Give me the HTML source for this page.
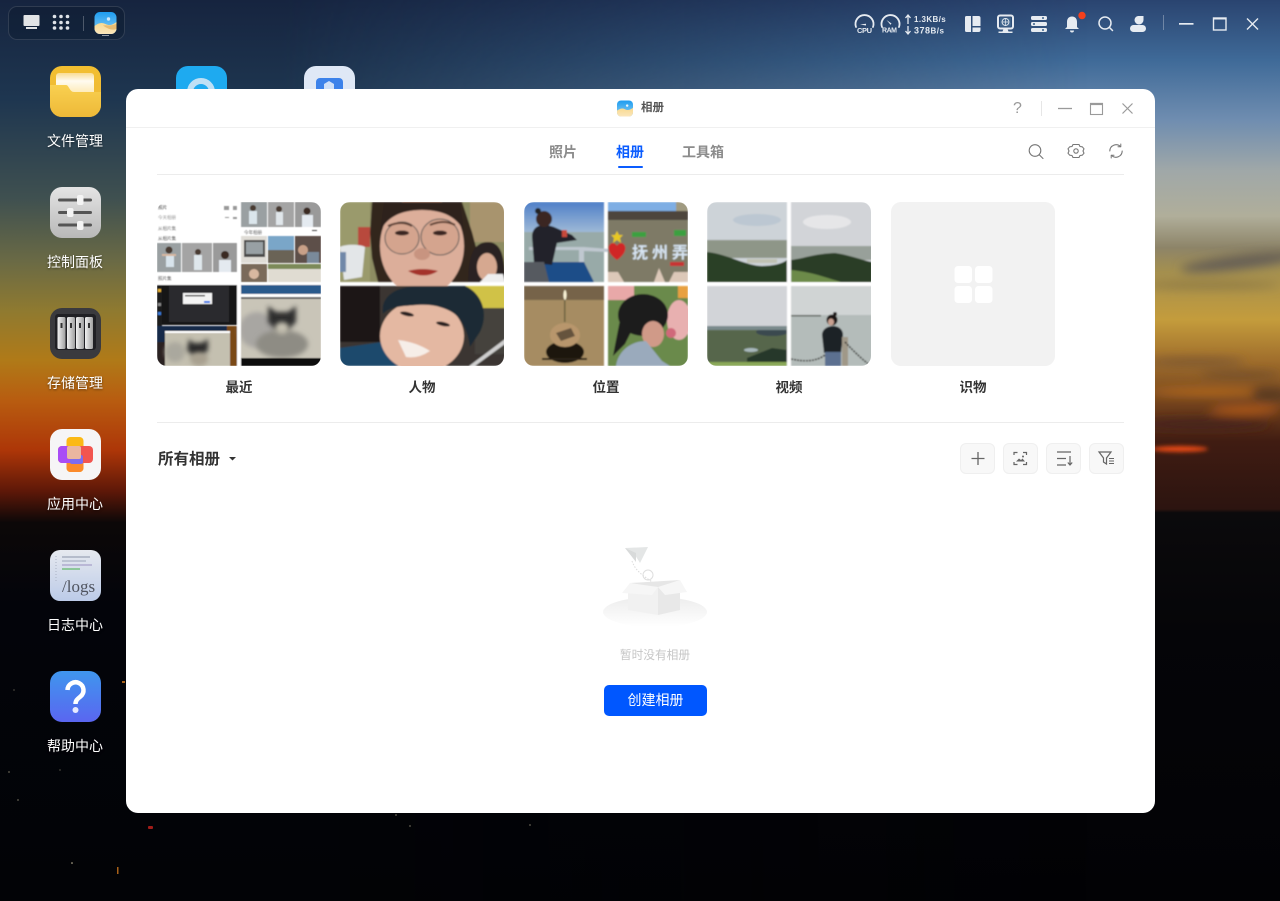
<!DOCTYPE html>
<html lang="zh"><head><meta charset="utf-8"><title>相册</title>
<style>
html,body{margin:0;padding:0;width:1280px;height:901px;overflow:hidden;background:#020306}
body{position:relative;font-family:"Liberation Sans","Noto Sans CJK SC",sans-serif}
.abs,.lbl,.t,.tile,.tl,.btn{position:absolute}
svg{display:block;overflow:visible}
.lbl{left:25px;width:100px;text-align:center;color:#fff;font-size:14px;line-height:20px;text-shadow:0 1px 2px rgba(0,0,0,.5)}
.win{position:absolute;left:126px;top:89px;width:1029px;height:724px;background:#fff;border-radius:12px;overflow:hidden}
.t{font-weight:700;font-size:14px;line-height:20px;color:#8c8c8c;top:142px}
.line{position:absolute;height:1px;background:#ececec}
.tile{top:202px;width:164px;height:164px;border-radius:10px;overflow:hidden}
.tl{top:379px;width:164px;text-align:center;font-size:13.5px;font-weight:700;color:#333;line-height:18px}
.btn{top:443px;width:33px;height:29px;background:#f8f8f8;border:1px solid #efefef;border-radius:6px}
</style></head><body>

<!-- wallpaper -->
<svg class="abs" style="left:0;top:0" width="1280" height="901">
<defs>
<linearGradient id="gr" x1="0" y1="0" x2="0" y2="1">
<stop offset="0" stop-color="#2a4470"/><stop offset=".067" stop-color="#3f6a98"/><stop offset=".133" stop-color="#6f8db0"/><stop offset=".19" stop-color="#a0a8a8"/><stop offset=".24" stop-color="#b0ae9a"/><stop offset=".275" stop-color="#8d8468"/><stop offset=".3" stop-color="#a38f50"/><stop offset=".355" stop-color="#c49c3c"/><stop offset=".4" stop-color="#a06e2c"/><stop offset=".45" stop-color="#70401c"/><stop offset=".49" stop-color="#401c12"/><stop offset=".565" stop-color="#2c1410"/><stop offset=".569" stop-color="#0b0a0c"/><stop offset=".7" stop-color="#050508"/><stop offset="1" stop-color="#020205"/>
</linearGradient>
<linearGradient id="gl" x1="0" y1="0" x2="0" y2="1">
<stop offset="0" stop-color="#16243f"/><stop offset=".11" stop-color="#1e3650"/><stop offset=".22" stop-color="#3f5050"/><stop offset=".29" stop-color="#6a6a45"/><stop offset=".345" stop-color="#8f7a30"/><stop offset=".4" stop-color="#b07a18"/><stop offset=".445" stop-color="#b85c10"/><stop offset=".5" stop-color="#ad3608"/><stop offset=".545" stop-color="#5e1808"/><stop offset=".58" stop-color="#0c0808"/><stop offset=".67" stop-color="#03040a"/><stop offset="1" stop-color="#020306"/>
</linearGradient>
<linearGradient id="fade" x1="0" y1="0" x2="1" y2="0"><stop offset="0" stop-color="#fff"/><stop offset=".22" stop-color="#fff"/><stop offset=".85" stop-color="#000"/></linearGradient>
<mask id="m"><rect width="1280" height="901" fill="url(#fade)"/></mask>
<filter id="b4" x="-30%" y="-100%" width="160%" height="300%"><feGaussianBlur stdDeviation="5"/></filter>
<filter id="b2" x="-30%" y="-100%" width="160%" height="300%"><feGaussianBlur stdDeviation="2"/></filter>
</defs>
<rect width="1280" height="901" fill="url(#gr)"/>
<rect width="1280" height="901" fill="url(#gl)" mask="url(#m)"/>
<g filter="url(#b4)">
<ellipse cx="1240" cy="262" rx="60" ry="7" fill="#665f54" transform="rotate(-7 1240 262)"/>
<ellipse cx="1210" cy="285" rx="70" ry="4" fill="#8f7a44"/>
<ellipse cx="1195" cy="362" rx="50" ry="4" fill="#7a5630"/>
<ellipse cx="1240" cy="375" rx="40" ry="3" fill="#6b4a2a"/>
<ellipse cx="1210" cy="392" rx="60" ry="3" fill="#c4701e"/>
<ellipse cx="1245" cy="410" rx="35" ry="3" fill="#d2681a"/>
<ellipse cx="1270" cy="395" rx="20" ry="7" fill="#5a3a22"/>
<ellipse cx="1200" cy="424" rx="70" ry="5" fill="#45241a"/>
</g>
<ellipse cx="1180" cy="449" rx="28" ry="3" fill="#e84a14" filter="url(#b2)"/>
<g fill="#c9c0a0"><circle cx="9" cy="772" r=".6"/><circle cx="18" cy="800" r=".6"/><circle cx="72" cy="863" r=".8"/><circle cx="410" cy="826" r=".6"/><circle cx="396" cy="815" r=".6"/><circle cx="530" cy="825" r=".6"/><circle cx="60" cy="770" r=".5"/><circle cx="14" cy="690" r=".5"/></g>
<rect x="148" y="826" width="5" height="3" fill="#a01c18" rx="1"/>
<rect x="117" y="867" width="1.500" height="7" fill="#a86018"/>
<rect x="122" y="681" width="3" height="2" fill="#a86018"/>
</svg>

<!-- top-left dock -->
<div class="abs" style="left:8px;top:6px;width:115px;height:32px;border-radius:9px;border:1px solid rgba(255,255,255,.13);background:rgba(10,22,40,.35)"></div>
<svg class="abs" style="left:0;top:0" width="130" height="42">
<defs><linearGradient id="sky" x1="0" y1="0" x2="0" y2="1"><stop offset="0" stop-color="#1d9cf0"/><stop offset="1" stop-color="#8fd0f2"/></linearGradient>
<linearGradient id="sand" x1="0" y1="0" x2="0" y2="1"><stop offset="0" stop-color="#f8d98e"/><stop offset="1" stop-color="#fbe6bb"/></linearGradient></defs>
<rect x="23.500" y="15" width="16" height="11" rx="1" fill="#e2e4e6"/><rect x="26" y="27" width="11" height="2" fill="#e2e4e6"/>
<g fill="#dfe3e8"><circle cx="54.500" cy="16.500" r="1.800"/><circle cx="61" cy="16.500" r="1.800"/><circle cx="67.500" cy="16.500" r="1.800"/><circle cx="54.500" cy="22.500" r="1.800"/><circle cx="61" cy="22.500" r="1.800"/><circle cx="67.500" cy="22.500" r="1.800"/><circle cx="54.500" cy="28" r="1.800"/><circle cx="61" cy="28" r="1.800"/><circle cx="67.500" cy="28" r="1.800"/></g>
<rect x="83" y="16" width="1" height="15" fill="rgba(255,255,255,.25)"/>
<g><rect x="94.500" y="12" width="22" height="22" rx="5.500" fill="url(#sky)"/><path d="M94.500 26c4-3 7-4 11-2s7 1 11-2v6.500a5.500 5.500 0 0 1-5.500 5.500h-11a5.500 5.500 0 0 1-5.500-5.500z" fill="url(#sand)"/><path d="M103 25.500c4-1 6 1 13.500-1.500v5c-5 2-10-1-13.500-3.500z" fill="#e8bc72"/><circle cx="108.500" cy="19" r="1.700" fill="#cfe9fa"/></g>
<rect x="102" y="35" width="7" height="1" fill="rgba(255,255,255,.55)"/>
</svg>

<!-- top-right status bar -->
<svg class="abs" style="left:840px;top:0" width="440" height="40" font-family="Liberation Sans" fill="#e6ebf1">
<g fill="none" stroke="#e6ebf1" stroke-width="1.800" stroke-linecap="round"><path d="M16 27a9 9 0 1 1 17 0"/><path d="M42 27a9 9 0 1 1 17 0"/></g>
<path d="M20 24.500l6-.8v1.800z"/><path d="M46.500 20l5 3.500-1 1.200z"/>
<text x="17" y="33" font-size="7.500" font-weight="700" textLength="15">CPU</text>
<text x="42" y="32.500" font-size="7" font-weight="700" textLength="15">RAM</text>
<g fill="none" stroke="#e6ebf1" stroke-width="1.300"><path d="M68 24v-9M65.500 18l2.500-3 2.500 3"/><path d="M68 26v8M65.500 31l2.500 3 2.500-3"/></g>
<text x="74" y="22" font-size="8" font-weight="700" letter-spacing=".4">1.3KB/s</text>
<text x="74" y="33.500" font-size="9" font-weight="700" letter-spacing=".5">378<tspan font-size="8">B/s</tspan></text>
<path d="M125 17.500a1.500 1.500 0 0 1 1.500-1.500h4.500v16h-4.500a1.500 1.500 0 0 1-1.500-1.500zM132.500 16h6a2 2 0 0 1 2 2v8h-8zM132.500 27.500h8v2.500a2 2 0 0 1-2 2h-6z"/>
<rect x="158" y="15.500" width="15" height="13" rx="2" fill="none" stroke="#e6ebf1" stroke-width="2"/><rect x="160" y="17.500" width="11" height="9" fill="#4f7ba0" opacity=".5"/><circle cx="165.500" cy="22" r="3.500" fill="none" stroke="#e6ebf1" stroke-width=".9"/><path d="M162 22h7M165.500 18.500v7" stroke="#e6ebf1" stroke-width=".7"/><path d="M163.500 29h4l1 2.500h4v1.500h-14v-1.500h4z"/>
<rect x="191" y="16" width="16" height="4" rx="1.500"/><rect x="191" y="22" width="16" height="4" rx="1.500"/><rect x="191" y="28" width="16" height="4" rx="1.500"/>
<circle cx="203" cy="18" r="1" fill="#3a6088"/><circle cx="194" cy="24" r="1" fill="#3a6088"/><circle cx="203" cy="30" r="1" fill="#3a6088"/>
<path d="M232 16.500c3.500 0 5 2.500 5 5.500v5l2 2h-14l2-2v-5c0-3 1.500-5.500 5-5.500zM230 30.500h4a2 2 0 0 1-4 0z"/>
<circle cx="242" cy="15.500" r="3.700" fill="#f4401c"/>
<g fill="none" stroke="#e6ebf1" stroke-width="1.500" stroke-linecap="round"><circle cx="265" cy="23" r="6"/><path d="M269.500 27.500l3 3"/></g>
<path d="M298 16h5.500v4a4.500 4.500 0 0 1-9 0 4.500 4.500 0 0 1 3.500-4z"/><rect x="290" y="25" width="16" height="7" rx="3.500"/>
<rect x="323" y="15" width="1" height="15" fill="rgba(255,255,255,.3)"/>
<rect x="339" y="23" width="14.500" height="1.700"/>
<rect x="373.500" y="18" width="12.500" height="12" fill="none" stroke="#e6ebf1" stroke-width="1.400"/><rect x="373" y="17.500" width="13.500" height="2"/>
<path d="M407 18.500l11 11M418 18.500l-11 11" stroke="#e6ebf1" stroke-width="1.400" fill="none"/>
</svg>

<!-- desktop icons -->
<svg class="abs" style="left:0;top:0" width="400" height="800" font-family="Liberation Serif">
<defs>
<linearGradient id="y1" x1="0" y1="0" x2="0" y2="1"><stop offset="0" stop-color="#f2bf30"/><stop offset="1" stop-color="#eeb83c"/></linearGradient>
<linearGradient id="y2" x1="0" y1="0" x2="0" y2="1"><stop offset="0" stop-color="#f9d050"/><stop offset="1" stop-color="#eeb938"/></linearGradient>
<linearGradient id="w1" x1="0" y1="0" x2="0" y2="1"><stop offset="0" stop-color="#f9dc94"/><stop offset=".35" stop-color="#fffbf0"/><stop offset="1" stop-color="#fde6a8"/></linearGradient>
<linearGradient id="g1" x1="0" y1="0" x2="0" y2="1"><stop offset="0" stop-color="#e4e4e4"/><stop offset="1" stop-color="#b8b8b8"/></linearGradient>
<linearGradient id="bar" x1="0" y1="0" x2="1" y2="0"><stop offset="0" stop-color="#f2f2f2"/><stop offset="1" stop-color="#a0a0a0"/></linearGradient>
<linearGradient id="lg" x1="0" y1="0" x2="0" y2="1"><stop offset="0" stop-color="#e6e9ef"/><stop offset="1" stop-color="#bccbe8"/></linearGradient>
<linearGradient id="hp" x1="0" y1="0" x2="0" y2="1"><stop offset="0" stop-color="#3f96ee"/><stop offset="1" stop-color="#5a66f0"/></linearGradient>
</defs>
<!-- files -->
<rect x="50" y="66" width="51" height="51" rx="12" fill="url(#y1)"/>
<path d="M56 76a3 3 0 0 1 3-3h32a3 3 0 0 1 3 3v20H56z" fill="url(#w1)"/>
<path d="M50 85h16c3 0 3.500 7 8 7h27v13a12 12 0 0 1-12 12H62a12 12 0 0 1-12-12z" fill="url(#y2)"/>
<!-- second col -->
<rect x="176" y="66" width="51" height="40" rx="12" fill="#1eaaf0"/>
<circle cx="201" cy="92" r="11" fill="none" stroke="#bfe0f5" stroke-width="6"/>
<rect x="304" y="66" width="51" height="40" rx="12" fill="#dfe8f6"/>
<path d="M316 82a4 4 0 0 1 4-4h19a4 4 0 0 1 4 4v15h-27z" fill="#3c82ea"/>
<path d="M329 81l5 3v5h-10v-5z" fill="#cfe0f8"/>
<!-- control -->
<rect x="50" y="187" width="51" height="51" rx="12" fill="url(#g1)"/>
<g fill="#555"><rect x="58" y="198.500" width="34" height="3" rx="1.500"/><rect x="58" y="211" width="34" height="3" rx="1.500"/><rect x="58" y="223.500" width="34" height="3" rx="1.500"/></g>
<g fill="#f4f4f4"><rect x="77" y="195" width="6.500" height="10" rx="2"/><rect x="67" y="208" width="6.500" height="9" rx="2"/><rect x="77" y="221" width="6.500" height="9" rx="2"/></g>
<!-- storage -->
<rect x="50" y="308" width="51" height="51" rx="12" fill="#3a3a3e"/>
<rect x="55" y="314" width="41" height="36" rx="3" fill="#202024"/>
<g fill="url(#bar)"><rect x="57.500" y="317" width="8" height="32" rx="1.500"/><rect x="67" y="317" width="8" height="32" rx="1.500"/><rect x="76" y="317" width="8" height="32" rx="1.500"/><rect x="85" y="317" width="8" height="32" rx="1.500"/></g>
<g fill="#333"><rect x="60.500" y="323" width="2" height="5"/><rect x="70" y="323" width="2" height="5"/><rect x="79" y="323" width="2" height="5"/><rect x="88" y="323" width="2" height="5"/></g>
<!-- app -->
<rect x="50" y="429" width="51" height="51" rx="12" fill="#f6f5f6"/>
<rect x="66.500" y="437" width="17" height="35" rx="4" fill="#fbb916"/>
<rect x="66.500" y="455" width="17" height="17" rx="4" fill="#fb8a2c"/>
<rect x="58" y="446" width="35" height="17" rx="4" fill="#f2554f"/>
<rect x="58" y="446" width="17" height="17" rx="4" fill="#a94cf5"/>
<rect x="70" y="455" width="13" height="9" rx="2" fill="#7d6cf0"/>
<rect x="67" y="446" width="14" height="13" rx="2" fill="#eab6a0"/>
<!-- logs -->
<rect x="50" y="550" width="51" height="51" rx="10" fill="url(#lg)"/>
<g stroke-width="1"><path d="M62 557h28" stroke="#8a93a8"/><path d="M62 561h24" stroke="#9aa4b8"/><path d="M62 565h30" stroke="#9a8fc0"/><path d="M62 569h18" stroke="#43b04a"/><path d="M56 556v26" stroke="#aab2c4" stroke-dasharray="1 2"/></g>
<text x="62" y="592" font-size="17" fill="#50545f">/logs</text>
<!-- help -->
<rect x="50" y="671" width="51" height="51" rx="12" fill="url(#hp)"/>
<path d="M67.500 690a8 8 0 1 1 13 6.500c-3 2.500-5 4-5 7.500" fill="none" stroke="#fff" stroke-width="4.500"/>
<circle cx="75.500" cy="710" r="3" fill="#e8eaff"/>
</svg>
<div class="lbl" style="top:131px">文件管理</div>
<div class="lbl" style="top:252px">控制面板</div>
<div class="lbl" style="top:373px">存储管理</div>
<div class="lbl" style="top:494px">应用中心</div>
<div class="lbl" style="top:615px">日志中心</div>
<div class="lbl" style="top:736px">帮助中心</div>

<!-- window -->
<div class="win"></div>
<div class="line" style="left:126px;top:127px;width:1029px;background:#f0f0f0"></div>
<svg class="abs" style="left:617px;top:100px" width="16" height="17" viewBox="94.500 12 22 22"><rect x="94.500" y="12" width="22" height="22" rx="5.500" fill="url(#sky)"/><path d="M94.500 26c4-3 7-4 11-2s7 1 11-2v6.500a5.500 5.500 0 0 1-5.500 5.500h-11a5.500 5.500 0 0 1-5.500-5.500z" fill="url(#sand)"/><circle cx="108.500" cy="19" r="1.700" fill="#e8f4fc"/></svg>
<div class="abs" style="left:641px;top:100px;font-size:11.500px;line-height:16px;color:#555;font-weight:700">相册</div>
<div class="abs" style="left:1013px;top:99px;font-size:16px;line-height:20px;color:#999">?</div>
<svg class="abs" style="left:1030px;top:95px" width="115" height="30" fill="none" stroke="#9a9a9a">
<path d="M11.500 6v15" stroke="#e6e6e6"/><path d="M28 13.500h14" stroke-width="1.300"/>
<rect x="60.500" y="8.500" width="12" height="11" stroke-width="1.100"/><path d="M60 9h13" stroke-width="2.200"/>
<path d="M92.500 8.500l10 10M102.500 8.500l-10 10" stroke-width="1.200"/>
</svg>
<div class="t" style="left:549px">照片</div>
<div class="t" style="left:616px;color:#0a5cff">相册</div>
<div class="t" style="left:682px">工具箱</div>
<div class="abs" style="left:618px;top:166px;width:25px;height:2px;background:#0a5cff;border-radius:1px"></div>
<svg class="abs" style="left:1020px;top:136px" width="110" height="30" fill="none" stroke="#777" stroke-width="1.100" stroke-linecap="round" stroke-linejoin="round">
<circle cx="15" cy="14.500" r="5.800"/><path d="M19.500 19l3.500 3.500"/>
<path d="M53 8.500h6l1 2 2.300.3 1.700 2 -1 2.200 1 2.200-1.700 2-2.300.3-1 2h-6l-1-2-2.300-.3-1.700-2 1-2.200-1-2.200 1.700-2 2.300-.3z"/>
<circle cx="56" cy="15" r="2.200"/>
<path d="M89.800 15a6.300 6.300 0 0 1 10.700-4.400M102.200 15a6.300 6.300 0 0 1-10.700 4.400"/>
<path d="M100.800 8v2.800H98M91.200 22v-2.800H94" stroke-width="1"/>
</svg>
<div class="line" style="left:157px;top:174px;width:967px"></div>

<!-- photo tiles -->
<div class="tile" style="left:157px;background:#fff"><svg width="164" height="164" font-family="Liberation Sans" font-size="4.500">
<defs><filter id="s" x="0" y="0" width="100%" height="100%"><feGaussianBlur stdDeviation=".9"/></filter>
<filter id="s0" x="0" y="0" width="100%" height="100%"><feGaussianBlur stdDeviation=".5"/></filter>
<filter id="s2" x="-30%" y="-30%" width="160%" height="160%"><feGaussianBlur stdDeviation="2.500"/></filter>
<linearGradient id="skyb" x1="0" y1="0" x2="0" y2="1"><stop offset="0" stop-color="#4f80c8"/><stop offset="1" stop-color="#a8c0d8"/></linearGradient></defs>
<g filter="url(#s0)">
<text x="1" y="7" fill="#333">照片</text><text x="1" y="17" fill="#999">今天相册</text><text x="1" y="28" fill="#777">从相片集</text><text x="1" y="38" fill="#555">从相片集</text><text x="1" y="78" fill="#555">照片集</text>
<rect x="67" y="4" width="5" height="4" fill="#999"/><rect x="76" y="4" width="4" height="4" fill="#999"/><rect x="68" y="15" width="4" height="1" fill="#999"/><rect x="76" y="15" width="4" height="2" fill="#999"/>
<rect x="0" y="41" width="24" height="29" fill="#9aa0a2"/><rect x="9" y="52" width="8" height="13" fill="#d8e4ec"/><circle cx="12" cy="48" r="3.500" fill="#4a3a30"/><rect x="5" y="52" width="14" height="2" fill="#d8b8a0"/>
<rect x="25" y="41" width="30" height="29" fill="#a4a4a4"/><rect x="37" y="53" width="8" height="15" fill="#dfe7ec"/><circle cx="41" cy="50" r="3" fill="#4a3a30"/>
<rect x="56" y="41" width="24" height="29" fill="#9a9a9a"/><rect x="62" y="58" width="12" height="12" fill="#e4eaf0"/><circle cx="68" cy="53" r="4" fill="#3a2a24"/>
<rect x="84" y="0" width="26" height="25" fill="#9aa0a2"/><rect x="92" y="9" width="8" height="13" fill="#dbe6ec"/><circle cx="96" cy="6" r="3" fill="#4a3a30"/>
<rect x="111" y="0" width="26" height="25" fill="#a4a4a4"/><rect x="119" y="10" width="7" height="13" fill="#e0e6ea"/><circle cx="122" cy="7" r="3" fill="#4a3a30"/>
<rect x="138" y="0" width="26" height="25" fill="#9a9a9a"/><rect x="145" y="13" width="11" height="12" fill="#e4eaf0"/><circle cx="150" cy="9" r="3.500" fill="#3a2a24"/>
<text x="87" y="32" fill="#666">今年相册</text><rect x="155" y="28" width="5" height="1" fill="#444"/>
<rect x="84" y="34" width="26" height="27" fill="#dfdcd6"/><rect x="87" y="38" width="21" height="17" fill="#4c4c4c"/><rect x="89" y="40" width="17" height="12" fill="#98a0a4"/>
<rect x="111" y="34" width="26" height="27" fill="#7aa6c8"/><rect x="111" y="48" width="26" height="13" fill="#6a6456"/>
<rect x="138" y="34" width="26" height="27" fill="#5d5048"/><circle cx="146" cy="48" r="5" fill="#c8a088"/><rect x="150" y="50" width="12" height="11" fill="#7a8a9a"/>
<rect x="84" y="62" width="26" height="18" fill="#7a6a5a"/><circle cx="97" cy="72" r="5" fill="#d8b8a0"/>
<rect x="111" y="62" width="53" height="18" fill="#e0dcd2"/><rect x="111" y="62" width="53" height="5" fill="#7b8a58"/>
<rect x="0" y="83" width="80" height="40" fill="#141416"/><rect x="12" y="84" width="60" height="36" fill="#2c2c2e"/><rect x="0" y="84" width="5" height="40" fill="#1c1c1c"/><rect x="1" y="87" width="3" height="3" fill="#e8b030"/><rect x="1" y="101" width="3" height="3" fill="#888"/><rect x="1" y="110" width="3" height="3" fill="#3a7ad8"/>
<rect x="26" y="91" width="29" height="11" fill="#f4f4f4"/><rect x="47" y="99" width="6" height="2" fill="#2a72e8"/><rect x="28" y="93" width="20" height="1.500" fill="#555"/>
<rect x="0" y="124" width="80" height="40" fill="#162a48"/><rect x="70" y="124" width="10" height="40" fill="#7a4a18"/><rect x="0" y="140" width="8" height="24" fill="#2a2020"/>
<rect x="8" y="130" width="65" height="34" fill="#c4c0b0"/><rect x="8" y="129" width="65" height="2" fill="#fff"/>
<ellipse cx="18" cy="150" rx="10" ry="10" fill="#aaa89e" filter="url(#s2)"/>
<path d="M32 137l4 4 9 0 6-4 0 11-6 6h-9l-6-6z" fill="#2a2a2a" filter="url(#s2)"/><ellipse cx="42" cy="157" rx="9" ry="7" fill="#a8a090" filter="url(#s2)"/>
<rect x="84" y="83" width="80" height="9" fill="#2a5a8c"/><rect x="84" y="92" width="80" height="3" fill="#fff"/><rect x="84" y="95" width="80" height="2" fill="#666"/>
<rect x="84" y="97" width="80" height="59" fill="#c9c5b8"/>
<ellipse cx="100" cy="128" rx="18" ry="18" fill="#a8a6a2" filter="url(#s2)"/>
<ellipse cx="125" cy="142" rx="26" ry="14" fill="#8e8c84" filter="url(#s2)"/>
<path d="M111 104l8 6 12 0 8-6 0 16-8 8h-12l-8-8z" fill="#2e2e2e" filter="url(#s2)"/>
<ellipse cx="125" cy="126" rx="7" ry="6" fill="#c4c0b0" filter="url(#s2)"/>
<rect x="84" y="156" width="80" height="8" fill="#0e0e0e"/>
<rect x="0" y="81" width="164" height="2" fill="#fff"/>
<rect x="80" y="0" width="4" height="164" fill="#fff"/>
</g></svg></div>

<div class="tile" style="left:340px;background:#fff"><svg width="165" height="164">
<g filter="url(#s)">
<rect width="165" height="80" fill="#8d8c62"/><rect x="0" y="0" width="30" height="80" fill="#9a9a6c"/><rect x="130" y="0" width="35" height="40" fill="#a8946e"/><rect x="18" y="25" width="12" height="20" fill="#b84a3c"/>
<path d="M32 0h90l10 30 8 30-8 20H38l-6-24-2-25z" fill="#33261f"/>
<ellipse cx="82" cy="44" rx="42" ry="50" fill="#dcae9a"/><path d="M40 30c6-14 20-22 42-22s36 8 42 22l-4-30H44z" fill="#2e211b"/>
<ellipse cx="62" cy="36" rx="17" ry="16" fill="#d4a48e" stroke="#5c5a58" stroke-width="1"/>
<ellipse cx="100" cy="35" rx="19" ry="18" fill="#d4a48e" stroke="#5c5a58" stroke-width="1"/>
<ellipse cx="62" cy="31" rx="7" ry="2.500" fill="#3a2824"/><ellipse cx="100" cy="31" rx="7" ry="2.500" fill="#3a2824"/>
<path d="M48 24q14-6 24 0M90 23q14-6 25 0" stroke="#5a3c30" stroke-width="2" fill="none"/>
<ellipse cx="82" cy="52" rx="8" ry="6" fill="#c89480"/>
<path d="M68 69q14-4 30 0q-14 9-30 0z" fill="#a4322a"/>
<path d="M0 45c5-3 20-3 25 0l-3 30-18 3z" fill="#e3e6e8"/><path d="M0 50h6v20H0z" fill="#7088a8"/>
<path d="M128 80c0-25 5-40 20-40s17 20 17 40z" fill="#2c2220"/><ellipse cx="147" cy="65" rx="10" ry="14" fill="#d6a890"/><path d="M140 80l8-8 15 0 2 8z" fill="#eeeeee"/>
<rect y="84" width="165" height="80" fill="#3a3630"/><rect x="0" y="84" width="40" height="56" fill="#1a1612"/><rect x="125" y="84" width="40" height="22" fill="#d0c246"/>
<rect x="135" y="106" width="30" height="46" fill="#45423c"/><path d="M0 146l42-6 18 24H0z" fill="#1e4a6c"/><path d="M135 164l30-22v-5l-36 27z" fill="#cfcfcf"/>
<ellipse cx="82" cy="134" rx="42" ry="36" fill="#e4b8a2"/>
<path d="M43 112C40 95 55 84 80 84L125 84C140 90 150 110 140 130L130 145C128 130 122 115 110 109C100 104 90 102 77 103C65 104 50 104 43 112z" fill="#1f2c34"/>
<ellipse cx="67" cy="112" rx="7" ry="2" fill="#2c2220" transform="rotate(12 67 112)"/><ellipse cx="103" cy="122" rx="7" ry="2" fill="#2c2220" transform="rotate(12 103 122)"/>
<path d="M58 138q18 2 32 11-12 8-24 6z" fill="#f6eee8"/>
</g></svg></div>

<div class="tile" style="left:524px;background:#fff"><svg width="164" height="164">
<g filter="url(#s)">
<rect width="80" height="34" fill="url(#skyb)"/><rect y="30" width="80" height="50" fill="#98aaa8"/>
<path d="M5 45l55 0 25 2v3l-25-1v15H55V48H5z" fill="#c0c8d0"/>
<path d="M0 60h60l10 20H0z" fill="#1c4e88"/>
<path d="M8 35c0-10 8-15 22-10l18 8 5 5-20 3-5 22-18-2z" fill="#20232a"/>
<circle cx="20" cy="17" r="8" fill="#3a2824"/><circle cx="14" cy="9" r="3" fill="#222"/>
<path d="M0 60h20l5 20H0z" fill="#565a60"/><rect x="38" y="28" width="5" height="7" fill="#c84a3a"/>
<rect x="84" width="80" height="80" fill="#7eaee4"/><path d="M84 9h80v9H84z" fill="#4e443c"/><rect x="84" y="18" width="80" height="62" fill="#7e7a66"/>
<rect x="152" y="0" width="12" height="9" fill="#a09a80"/>
<path d="M93 29l2 4 4 0-3 3 1 5-4-3-4 3 1-5-3-3 4 0z" fill="#e8c820"/>
<path d="M93 58c-12-8-9-17-4-17 2 0 4 2 4 3 0-1 2-3 4-3 5 0 8 9-4 17z" fill="#d02828"/>
<g font-family="Liberation Sans,Noto Sans CJK SC,sans-serif" font-size="16" font-weight="700" fill="#d8e6f4"><text x="108" y="56">抚</text><text x="128" y="56">州</text><text x="148" y="56">弄</text></g>
<rect x="108" y="30" width="14" height="5" fill="#3aa040"/><rect x="150" y="28" width="12" height="6" fill="#3aa040"/><rect x="146" y="60" width="14" height="4" fill="#c83030"/>
<path d="M84 80v-10h10l6 10zM130 80l5-14 6 14zM145 80l5-10 14 0v10z" fill="#dcc8b8"/>
<rect y="84" width="80" height="80" fill="#a68c62"/><rect y="84" width="80" height="14" fill="#76644a"/>
<rect x="40" y="96" width="1.500" height="24" fill="#6a6040"/><ellipse cx="41" cy="93" rx="1.500" ry="5" fill="#fdf6d8"/>
<ellipse cx="41" cy="150" rx="19" ry="11" fill="#1c1810"/><ellipse cx="41" cy="133" rx="15" ry="12" fill="#b8966c"/><path d="M32 131l15-5 4 8-14 5z" fill="#42342a" opacity=".7"/>
<path d="M18 157h45" stroke="#2a2218" stroke-width="2"/>
<rect x="84" y="84" width="80" height="80" fill="#6a8a4c"/><rect x="84" y="84" width="26" height="14" fill="#e8a8a8"/><ellipse cx="155" cy="118" rx="12" ry="20" fill="#e8b0b0"/><rect x="154" y="84" width="10" height="12" fill="#e8a040"/>
<ellipse cx="119" cy="113" rx="25" ry="21" fill="#1e1a1c"/><path d="M96 118c-3 15-5 25-7 36l12-12 10-20z" fill="#1e1a1c"/>
<ellipse cx="129" cy="132" rx="11" ry="13" fill="#d09a88"/><path d="M92 164c2-15 15-25 30-25l16 20 8 5z" fill="#9aaabc"/>
<circle cx="147" cy="131" r="5" fill="#d0687a"/>
</g></svg></div>

<div class="tile" style="left:707px;background:#fff"><svg width="165" height="164">
<g filter="url(#s)">
<rect width="80" height="80" fill="#cdd3d8"/><ellipse cx="50" cy="18" rx="24" ry="6" fill="#bcc7d2"/><rect y="38" width="80" height="18" fill="#8e9688"/><path d="M0 50c20 2 40 14 55 14 10 0 20-2 25-6v22H0z" fill="#2c4028"/>
<rect x="40" y="57" width="30" height="4" fill="#c0c2b4"/>
<rect x="84" width="81" height="80" fill="#d2d4d8"/><ellipse cx="120" cy="20" rx="24" ry="7" fill="#e6e6e8"/><rect x="84" y="44" width="81" height="14" fill="#98a09a"/>
<path d="M84 58c15-2 22-6 44-7 15 2 26 7 37 9v20H84z" fill="#2a3e26"/><path d="M84 68c20 2 30 6 50 12H84z" fill="#6c8a48"/>
<rect y="84" width="80" height="40" fill="#d2d4d8"/><rect y="124" width="80" height="40" fill="#56664c"/><ellipse cx="65" cy="130" rx="16" ry="4" fill="#3a4a50"/><path d="M0 124h80v4H0z" fill="#7a8a8c"/>
<path d="M40 156l25-10 15 2v16H40z" fill="#26382a"/><path d="M0 160h80v4H0z" fill="#8aa858"/><ellipse cx="44" cy="148" rx="7" ry="2" fill="#a8b8bc"/>
<rect x="84" y="84" width="81" height="80" fill="#d0d4d4"/><rect x="84" y="113" width="81" height="51" fill="#b4bcba"/><rect x="84" y="113" width="30" height="1.500" fill="#5a6058"/>
<path d="M115 133c0-6 6-9 11-9s10 3 10 9l-2 18-17 0z" fill="#1c2028"/><rect x="118" y="150" width="16" height="14" fill="#5c7090"/><circle cx="125" cy="118" r="5.500" fill="#1c1816"/><circle cx="128" cy="112" r="2" fill="#1c1816"/><ellipse cx="124" cy="120" rx="3" ry="3.500" fill="#c8a090"/>
<rect x="135" y="135" width="6" height="29" fill="#a09888"/>
<path d="M84 157q22 5 34-4M138 140q15 16 26 24" fill="none" stroke="#2a2a26" stroke-width="1.500" stroke-dasharray="2 1"/>
<rect x="80" y="0" width="4" height="164" fill="#fff"/><rect x="0" y="81" width="165" height="3" fill="#fff"/>
</g></svg></div>

<div class="tile" style="left:891px;background:#f2f2f2"><svg width="164" height="164"><g fill="#fff"><rect x="63.500" y="64" width="17.500" height="17" rx="3.500"/><rect x="84" y="64" width="17.500" height="17" rx="3.500"/><rect x="63.500" y="84" width="17.500" height="17" rx="3.500"/><rect x="84" y="84" width="17.500" height="17" rx="3.500"/></g></svg></div>

<div class="tl" style="left:157px">最近</div>
<div class="tl" style="left:340px">人物</div>
<div class="tl" style="left:524px">位置</div>
<div class="tl" style="left:707px">视频</div>
<div class="tl" style="left:891px">识物</div>
<div class="line" style="left:157px;top:422px;width:967px"></div>

<div class="abs" style="left:158px;top:450px;font-size:15.500px;line-height:20px;font-weight:700;color:#333">所有相册</div>
<svg class="abs" style="left:229px;top:457px" width="7" height="4"><path d="M0 0h7L3.500 3.500z" fill="#333"/></svg>
<div class="btn" style="left:960px"></div><div class="btn" style="left:1003px"></div><div class="btn" style="left:1046px"></div><div class="btn" style="left:1089px"></div>
<svg class="abs" style="left:960px;top:443px" width="170" height="32" fill="none" stroke="#666" stroke-width="1.200">
<path d="M18 9v13M11.500 15.500h13" stroke-width="1.300"/>
<path d="M54 12v-2.500h3.500M63 9.500h3.500V12M66.500 19v2.500H63M57.500 21.500H54V19"/><path d="M56 18.500l3-3 2 1.500 1.500-1.500 2.500 3z" fill="#666" stroke="none"/><circle cx="63" cy="13.500" r="1" fill="#666" stroke="none"/>
<path d="M97 9h14M97 15.500h9M97 22h9M110 13v9M107.800 19.500l2.200 2.500 2.200-2.500"/>
<path d="M139 9h12l-4.500 6v6l-3-2v-4z"/><path d="M149 15.500h5M149 18h5M149 20.500h5" stroke-width="1"/>
</svg>

<!-- empty state -->
<svg class="abs" style="left:590px;top:535px" width="130" height="100">
<defs><linearGradient id="flo" x1="0" y1="0" x2="0" y2="1"><stop offset="0" stop-color="#ededed"/><stop offset="1" stop-color="#fff"/></linearGradient></defs>
<ellipse cx="65" cy="77" rx="52" ry="15" fill="url(#flo)"/>
<path d="M35 13l23-1-8 16-5-8z" fill="#e4e6e6"/><path d="M35 13l11 5 0 9z" fill="#d8dada"/>
<path d="M42 26c4 12 14 16 30 28" fill="none" stroke="#dcdcdc" stroke-dasharray="1.500 1.500"/>
<circle cx="58" cy="40" r="5" fill="none" stroke="#dedede" stroke-width="1"/>
<path d="M40 48l50-3-22 8z" fill="#e6e6e6"/>
<path d="M38 58l30-6v28l-30-5z" fill="#f1f1f1"/><path d="M68 52l22-5v28l-22 5z" fill="#e8e8e8"/>
<path d="M40 48l-8 10 30 2 6-8zM90 45l7 12-22 3-7-8z" fill="#f6f6f6"/>
</svg>
<div class="abs" style="left:555px;top:648px;width:200px;text-align:center;font-size:11.700px;line-height:16px;color:#c6c6c6">暂时没有相册</div>
<div class="abs" style="left:604px;top:685px;width:103px;height:31px;border-radius:5px;background:#0057ff;color:#fff;text-align:center;font-size:14px;line-height:30px">创建相册</div>
</body></html>
